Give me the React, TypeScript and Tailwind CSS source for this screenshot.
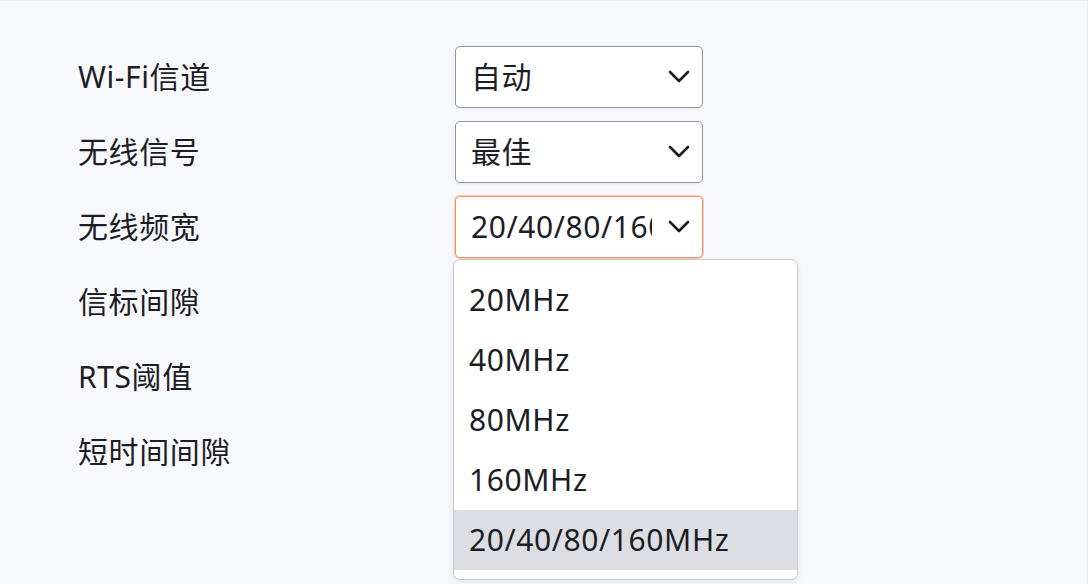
import React from "react";

const rows = ["Wi-Fi信道", "无线信号", "无线频宽", "信标间隙", "RTS阈值", "短时间间隙"];
const options = ["20MHz", "40MHz", "80MHz", "160MHz", "20/40/80/160MHz"];

const Chevron = () => (
  <svg width="22" height="13" viewBox="0 0 22 13" fill="none" className="shrink-0">
    <path d="M2 2l9 9 9-9" stroke="#1b1b22" strokeWidth="2.6" strokeLinecap="round" strokeLinejoin="round" />
  </svg>
);

function Select({ value, active }: { value: string; active?: boolean }) {
  return (
    <div
      className={`flex items-center h-[62px] w-[248px] rounded-[5px] bg-white pl-[15px] pr-[12px] border ${
        active
          ? "border-[#ef9466] shadow-[0_0_0_1px_rgba(239,148,102,0.45)]"
          : "border-[#96969e] shadow-[0_1px_2px_rgba(0,0,0,0.08)]"
      }`}
    >
      <span className="flex-1 overflow-hidden whitespace-nowrap mr-[16px]">{value}</span>
      <Chevron />
    </div>
  );
}

export default function App() {
  const values: Record<number, string> = { 0: "自动", 1: "最佳", 2: "20/40/80/160MHz" };

  return (
    <div
      className="w-[1088px] h-[584px] overflow-hidden bg-[#f7f8fb] border-t border-r border-[#eceef2] text-[#1d1d26] text-[30px] tracking-[0.6px]"
      style={{ fontFamily: '"Noto Sans", "Noto Sans CJK SC", sans-serif' }}
    >
      <div className="pt-[38px] pl-[78px] flex flex-col">
        {rows.map((label, i) => (
          <div key={label} className="flex items-center h-[75px]">
            <div className="w-[377px] leading-none">{label}</div>
            {values[i] !== undefined && (
              <div className="relative">
                <Select value={values[i]} active={i === 2} />
                {i === 2 && (
                  <div className="absolute left-[-2px] top-[63px] w-[345px] h-[321px] rounded-[7px] bg-white border border-[#c9cad0] shadow-[0_2px_6px_rgba(0,0,0,0.08)] py-[10px] overflow-hidden z-10">
                    {options.map((o, k) => (
                      <div
                        key={o}
                        className={`h-[60px] flex items-center pl-[15px] ${k === 4 ? "bg-[#dddee4]" : ""}`}
                      >
                        {o}
                      </div>
                    ))}
                  </div>
                )}
              </div>
            )}
          </div>
        ))}
      </div>
    </div>
  );
}
